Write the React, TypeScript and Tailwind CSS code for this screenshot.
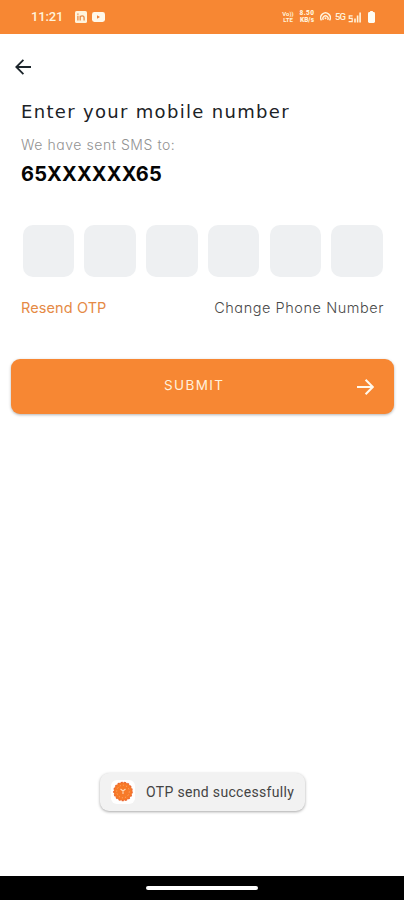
const poppins = "font-['Inter',sans-serif] [font-feature-settings:'cv11']";

function StatusBar() {
  return (
    <header className="flex h-[33.5px] shrink-0 items-center bg-[#f78733] pl-[31px] pr-[29px] text-[#fff3dc]">
      <span className="font-['Roboto',sans-serif] text-[13px] font-medium leading-4 tracking-[-0.15px]">11:21</span>
      <svg className="ml-[12px] h-3 w-3" viewBox="0 0 12 12">
        <rect width="12" height="12" rx="1.6" fill="#fff3dc" />
        <path d="M2.9 4.8v4.6M2.9 2.4v1.3M5.2 9.4V4.8M5.2 6.6c0-2.2 3.9-2.3 3.9.2v2.6" stroke="#e98a45" strokeWidth="1.3" fill="none" />
      </svg>
      <svg className="ml-[5px] h-[10px] w-[13px]" viewBox="0 0 13 10">
        <rect width="13" height="10" rx="2.4" fill="#fff8ea" />
        <path d="M5 3.2v3.6l3-1.8z" fill="#f08237" />
      </svg>
      <div className="ml-auto flex items-center">
        <div className="flex w-[12px] flex-col items-center font-['Roboto',sans-serif] text-[6px] font-bold leading-[6px]">
          <div>Vo))</div>
          <div>LTE</div>
        </div>
        <div className="ml-[5px] flex w-[16px] flex-col items-center font-['Roboto',sans-serif] text-[6.5px] font-black">
          <div className="leading-[7px] tracking-[0.4px]">8.50</div>
          <div className="leading-[7px]">KB/s</div>
        </div>
        <svg className="ml-[5px] h-[11px] w-[11px]" viewBox="0 0 11 11" fill="none" stroke="#fff3dc" strokeWidth="1.4">
          <path d="M1.5 9.4A4.8 4.8 0 1 1 9.5 9.4M3.4 8.9a2.6 2.6 0 1 1 4.2 0" />
          <circle cx="5.5" cy="7.2" r="1" fill="#fff3dc" stroke="none" />
        </svg>
        <span className="ml-[4px] w-[11px] font-['Roboto',sans-serif] text-[9.5px] font-medium leading-3 tracking-[-0.9px]">5G</span>
        <svg className="ml-[2px] h-[12px] w-[13px]" viewBox="0 0 13 12" fill="none" stroke="#fff3dc">
          <path d="M4.6 4.8H1.2v2.6h3v3.3H.6" strokeWidth="1.2" />
          <path d="M7 7.5v4M9.6 4.5v7M12.1 1.5v10" strokeWidth="1.6" />
        </svg>
        <svg className="ml-[7px] h-3 w-[7px]" viewBox="0 0 7 12" fill="#fffdf4">
          <rect y="1" width="7" height="11" rx="1.4" />
          <rect x="2" width="3" height="2" rx=".5" />
        </svg>
      </div>
    </header>
  );
}

function Emblem() {
  return (
    <svg className="h-[24px] w-[24px]" viewBox="0 0 24 24">
      <rect width="24" height="24" rx="6" fill="#fff" />
      <circle cx="12" cy="11.5" r="9.3" fill="#f77a28" />
      <circle cx="12" cy="11.5" r="9.2" fill="none" stroke="#ea6430" strokeWidth="1.2" strokeDasharray="2 1.4" />
      <circle cx="12" cy="11.5" r="6.3" fill="none" stroke="#fbb27c" strokeWidth=".8" strokeDasharray="1.2 2" />
      <path d="M9.5 9l2.5 2 2.5-2M12 11v3" fill="none" stroke="#ffd8b5" strokeWidth="1.1" />
    </svg>
  );
}

export default function App() {
  return (
    <div className="flex h-[900px] w-[404px] flex-col overflow-hidden bg-white">
      <StatusBar />
      <main className="flex flex-1 flex-col">
        <button aria-label="Back" className="ml-[15px] mt-[25px] h-4 w-4">
          <svg className="h-4 w-4" viewBox="0 0 16 16" fill="none" stroke="#1c252b" strokeWidth="1.8">
            <path d="M16 8H1.5M8.4 .8L1.3 8l7.1 7.2" />
          </svg>
        </button>
        <h1 className="ml-[21px] mt-[25px] whitespace-nowrap font-['DejaVu_Sans',sans-serif] text-[18px] leading-6 tracking-[1.32px] text-[#1b2226]">
          Enter your mobile number
        </h1>
        <p className={`${poppins} ml-[21px] mt-[11px] whitespace-nowrap text-[14px] font-light leading-5 tracking-[0.55px] text-[#929292]`}>
          We have sent SMS to:
        </p>
        <p className={`${poppins} ml-[21px] mt-[7px] whitespace-nowrap text-[20px] font-bold leading-6 tracking-[0.15px] text-[#050505]`}>
          65XXXXXX65
        </p>
        <div className="mt-[39.5px] flex justify-between pl-[22.5px] pr-[21px]">
          {[0, 1, 2, 3, 4, 5].map((slot) => (
            <div key={slot} className="h-[51.5px] w-[51.5px] rounded-[10px] bg-[#eef0f2]" />
          ))}
        </div>
        <div className={`${poppins} mt-[21.5px] flex h-5 items-center justify-between whitespace-nowrap pl-[21px] pr-[20px] text-[14.5px] leading-5`}>
          <a className="tracking-[0.1px] text-[#e58a45]">Resend OTP</a>
          <a className="font-light tracking-[0.55px] text-[#4a4a4a]">Change Phone Number</a>
        </div>
        <button className="ml-[11px] mr-[10px] mt-[41px] flex h-[55px] items-center rounded-[9px] bg-[#f78733] pl-[153px] pr-[20px] text-[#fff1dc] shadow-[0_1px_3px_rgba(0,0,0,0.3)]">
          <span className={`${poppins} -mt-[3px] text-[13.5px] leading-5 tracking-[1.4px]`}>SUBMIT</span>
          <svg className="ml-auto h-[18px] w-[18px]" viewBox="0 0 18 18" fill="none" stroke="#fff9ed" strokeWidth="2.1">
            <path d="M1 9h15.5M9.6 1.8L16.8 9l-7.2 7.2" />
          </svg>
        </button>
        <div className="ml-[99.5px] mb-[65.5px] mt-auto flex h-[38px] w-[205.5px] items-center rounded-[9px] bg-[#f2f2f2] pl-[11px] shadow-[0_1px_3px_rgba(0,0,0,0.35)]">
          <Emblem />
          <span className="ml-[11.5px] whitespace-nowrap font-['Roboto',sans-serif] text-[14px] leading-5 tracking-[0.33px] text-[#444]">
            OTP send successfully
          </span>
        </div>
      </main>
      <footer className="flex h-6 shrink-0 items-center justify-center bg-black">
        <div className="h-[4px] w-[112px] rounded-full bg-white" />
      </footer>
    </div>
  );
}
